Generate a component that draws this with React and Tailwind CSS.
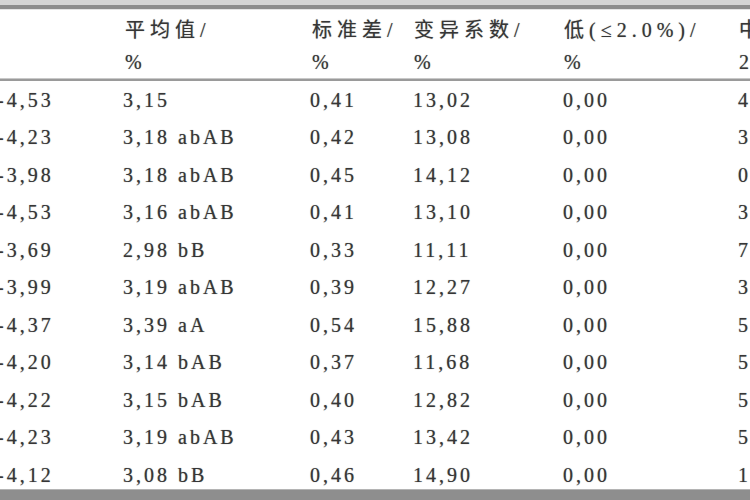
import React from "react";

const rows = [
  ["-4,53", "3,15", "0,41", "13,02", "0,00", "4"],
  ["-4,23", "3,18 abAB", "0,42", "13,08", "0,00", "3"],
  ["-3,98", "3,18 abAB", "0,45", "14,12", "0,00", "0"],
  ["-4,53", "3,16 abAB", "0,41", "13,10", "0,00", "3"],
  ["-3,69", "2,98 bB", "0,33", "11,11", "0,00", "7"],
  ["-3,99", "3,19 abAB", "0,39", "12,27", "0,00", "3"],
  ["-4,37", "3,39 aA", "0,54", "15,88", "0,00", "5"],
  ["-4,20", "3,14 bAB", "0,37", "11,68", "0,00", "5"],
  ["-4,22", "3,15 bAB", "0,40", "12,82", "0,00", "5"],
  ["-4,23", "3,19 abAB", "0,43", "13,42", "0,00", "5"],
  ["-4,12", "3,08 bB", "0,46", "14,90", "0,00", "1"],
];

const widths = ["w-[126px]", "w-[187px]", "w-[103px]", "w-[150px]", "w-[175px]", "w-[40px]"];

function HeadCell({ w, top, bottom }) {
  return (
    <div className={w + " shrink-0 flex flex-col whitespace-nowrap"}>
      <span>{top}</span>
      <span>{bottom}</span>
    </div>
  );
}

export default function App() {
  return (
    <div
      className="w-[750px] h-[500px] overflow-hidden bg-white flex flex-col text-[#363636] [text-shadow:0_0_1px_rgba(0,0,0,0.45)]"
      style={{ fontFamily: '"Liberation Serif", "Noto Sans CJK SC", serif' }}
    >
      <div className="h-[5px] bg-[#d4d4d4] shrink-0" />
      <div className="h-[4px] bg-[#8c8c8c] shrink-0" />
      <div className="h-[1px] bg-[#e4e4e4] shrink-0" />
      {/* header */}
      <div className="h-[68px] shrink-0 pt-[4px] flex ml-[-3px] text-[20px] leading-[32px] tracking-[5px]">
        <div className={widths[0] + " shrink-0"} />
        <HeadCell w="w-[187px] pl-[2px]" top="平均值/" bottom="%" />
        <HeadCell w="w-[103px] pl-[2px]" top="标准差/" bottom="%" />
        <HeadCell w="w-[150px] pl-[1px]" top="变异系数/" bottom="%" />
        <HeadCell w="w-[175px] pl-[1px]" top="低(≤2.0%)/" bottom="%" />
        <HeadCell w="w-[40px] pl-[1px]" top="中" bottom="2" />
      </div>
      <div className="h-[1px] bg-[#c8c8c8] shrink-0" />
      <div className="h-[2px] bg-[#9a9a9a] shrink-0" />
      {/* body */}
      <div className="flex-1 overflow-hidden flex flex-col">
        {rows.map((r, i) => (
          <div key={i} className="h-[37.5px] shrink-0 flex items-center ml-[-3px] text-[20px] tracking-[3px]">
            {r.map((c, j) => (
              <div key={j} className={widths[j] + " whitespace-nowrap shrink-0"}>
                {c}
              </div>
            ))}
          </div>
        ))}
      </div>
      <div className="h-[1px] bg-[#b4b4b4] shrink-0" />
      <div className="h-[10px] bg-[#8e8e8e] shrink-0" />
    </div>
  );
}
